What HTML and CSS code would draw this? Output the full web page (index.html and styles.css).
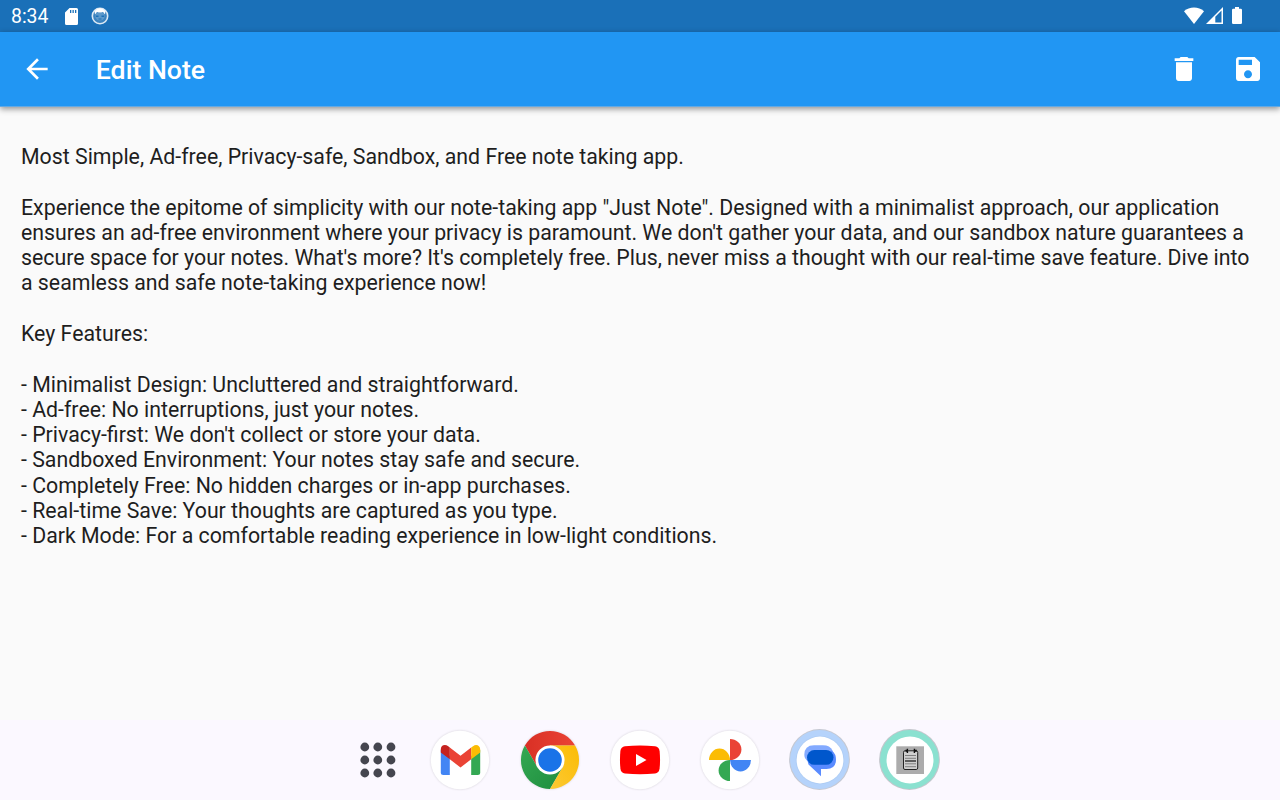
FILE: index.html
```html
<!DOCTYPE html>
<html lang="en">
<head>
<meta charset="utf-8">
<title>Edit Note</title>
<link rel="stylesheet" href="styles.css">
</head>
<body>
<div class="screen">
  <header class="status">
    <span class="clock">8:34</span>
    <svg class="sd" viewBox="0 0 13 17"><path fill="#fff" fill-rule="evenodd" d="M4.5 0H11.5Q13 0 13 1.5V15.5Q13 17 11.5 17H1.5Q0 17 0 15.5V4.5ZM5 2V5H6.3V2ZM7.5 2V5H8.8V2ZM10 2V5H11.3V2Z"/></svg>
    <svg class="face" viewBox="0 0 18 18"><circle cx="9" cy="9" r="7.7" fill="#3b83bf" stroke="#dce9f4" stroke-width="1.6"/><path fill="#fff" d="M3.5 4Q9-1.5 14.5 4L14 7.5 12 5Q9 6 6 5L4 7.5Z"/><path fill="#5c99cb" d="M4.5 7.5 6 5.5Q9 6.5 12 5.5L13.5 7.5V11Q12 13.5 9 13.5T4.5 11Z"/><path fill="#1a70b8" d="M5 8.5H7.5V10H5ZM10.5 8.5H13V10H10.5ZM7.5 11.5H10.5V12.5H7.5Z"/></svg>
    <span class="grow"></span>
    <svg class="wifi" viewBox="0 0 20 17"><path fill="#fff" d="M0 4.2Q4.3.5 10 .5T20 4.2L10 17Z"/></svg>
    <svg class="signal" viewBox="0 0 17 17"><path fill="#fff" fill-rule="evenodd" d="M17 0V17H0ZM15.5 3.6 9.3 9.8V15.5H15.5Z"/></svg>
    <svg class="battery" viewBox="0 0 10 17"><path fill="#fff" d="M3 0H7V1.7H8.8Q10 1.7 10 2.9V15.8Q10 17 8.8 17H1.2Q0 17 0 15.8V2.9Q0 1.7 1.2 1.7H3Z"/></svg>
  </header>
  <nav class="appbar">
    <svg class="icon" viewBox="0 0 24 24"><path d="M20 11H7.83l5.59-5.59L12 4l-8 8 8 8 1.41-1.41L7.83 13H20v-2z"/></svg>
    <h1 class="title">Edit Note</h1>
    <svg class="icon" viewBox="0 0 24 24"><path d="M6 19c0 1.1.9 2 2 2h8c1.1 0 2-.9 2-2V7H6v12zM19 4h-3.5l-1-1h-5l-1 1H5v2h14V4z"/></svg>
    <svg class="icon" viewBox="0 0 24 24"><path d="M17 3H5c-1.11 0-2 .9-2 2v14c0 1.1.89 2 2 2h14c1.1 0 2-.9 2-2V7l-4-4zm-5 16c-1.66 0-3-1.34-3-3s1.34-3 3-3 3 1.34 3 3-1.34 3-3 3zm3-10H5V5h10v4z"/></svg>
  </nav>
  <main class="note">
    <p>Most Simple, Ad-free, Privacy-safe, Sandbox, and Free note taking app.</p>
    <p>Experience the epitome of simplicity with our note-taking app "Just Note". Designed with a minimalist approach, our application<br>ensures an ad-free environment where your privacy is paramount. We don't gather your data, and our sandbox nature guarantees a<br>secure space for your notes. What's more? It's completely free. Plus, never miss a thought with our real-time save feature. Dive into<br>a seamless and safe note-taking experience now!</p>
    <p>Key Features:</p>
    <p>- Minimalist Design: Uncluttered and straightforward.<br>- Ad-free: No interruptions, just your notes.<br>- Privacy-first: We don't collect or store your data.<br>- Sandboxed Environment: Your notes stay safe and secure.<br>- Completely Free: No hidden charges or in-app purchases.<br>- Real-time Save: Your thoughts are captured as you type.<br>- Dark Mode: For a comfortable reading experience in low-light conditions.</p>
  </main>
  <footer class="dock">
    <svg class="app" viewBox="-8 0 62 62"><g fill="#45464f"><circle cx="17.8" cy="18" r="4.4"/><circle cx="30.8" cy="18" r="4.4"/><circle cx="44" cy="18" r="4.4"/><circle cx="17.8" cy="31" r="4.4"/><circle cx="30.8" cy="31" r="4.4"/><circle cx="44" cy="31" r="4.4"/><circle cx="17.8" cy="44" r="4.4"/><circle cx="30.8" cy="44" r="4.4"/><circle cx="44" cy="44" r="4.4"/></g></svg>
    <svg class="app disc" viewBox="0 0 62 62"><circle cx="31" cy="31" r="29.2" fill="#fff"/><path fill="#4285f4" d="M11.8 21V43.5Q11.8 46 14.3 46H20.8V27Z"/><path fill="#34a853" d="M42.2 27V46H48.7Q51.2 46 51.2 43.5V21Z"/><path fill="#ea4335" d="M20.8 18.5 31.5 26.8 42.2 18.5V30.2L31.5 38.4 20.8 30.2Z"/><path fill="#c5221f" d="M11.8 23.6V20.3C11.8 16 16.2 14.7 19.2 17.2L20.8 18.5V30.2Z"/><path fill="#fbbc04" d="M42.2 30.2V18.6L44 17.2C47.2 14.6 51.2 16.5 51.2 20.3V23.6Z"/></svg>
    <svg class="app disc" viewBox="0 0 62 62"><defs><linearGradient id="cr"><stop stop-color="#d93025"/><stop offset="1" stop-color="#ea4335"/></linearGradient><linearGradient id="cg" x1="1" y1="1" x2="0" y2="0"><stop stop-color="#1e8e3e"/><stop offset="1" stop-color="#34a853"/></linearGradient><linearGradient id="cy" x1="0" y1="1" x2="1" y2="0"><stop stop-color="#fcc934"/><stop offset="1" stop-color="#fbbc04"/></linearGradient></defs><path fill="url(#cr)" d="M5.9 16.4A29 29 0 0 1 56.1 16.4H31L18.4 38.3Z"/><path fill="url(#cg)" d="M5.9 16.4A29 29 0 0 0 31 60L43.6 38.3 31 31 18.4 38.3Z"/><path fill="url(#cy)" d="M56.1 16.4A29 29 0 0 1 31 60L43.6 38.3 31 31V16.4Z"/><circle cx="31" cy="31" r="14.6" fill="#fff"/><circle cx="31" cy="31" r="11.8" fill="#1a73e8"/></svg>
    <svg class="app disc" viewBox="0 0 62 62"><circle cx="31" cy="31" r="29.2" fill="#fff"/><path fill="red" d="M16 17.2Q31 16 46 17.2 50 17.6 50.6 22 51.5 31 50.6 39.5 50 44 46 44.5 31 45.8 16 44.5 12 44 11.4 39.5 10.5 31 11.4 22 12 17.6 16 17.2Z"/><path fill="#fff" d="M27 25 37.5 31 27 37Z"/></svg>
    <svg class="app disc" viewBox="0 0 62 62"><circle cx="31" cy="31" r="29.2" fill="#fff"/><path fill="#ea4335" d="M31 10A11.4 10.5 0 0 1 31 31Z"/><path fill="#4285f4" d="M52 31A10.5 11.4 0 0 1 31 31Z"/><path fill="#34a853" d="M31 52A11.4 10.5 0 0 1 31 31Z"/><path fill="#fbbc04" d="M10 31A10.5 11.4 0 0 1 31 31Z"/></svg>
    <svg class="app" viewBox="0 0 62 62"><circle cx="30.5" cy="30.5" r="30.4" fill="#c5c8d2"/><circle cx="30.5" cy="30.5" r="29.4" fill="#b5d3fb"/><circle cx="31" cy="31" r="24.2" fill="#a8c8f0" opacity=".6"/><circle cx="31" cy="31" r="23.4" fill="#fff"/><path fill="#83aaff" d="M25 16.3H34Q41 16.3 43.5 21.5L40 34H26L20 33Q15.3 30 15.3 26 15.3 16.3 25 16.3Z"/><path fill="#598bff" d="M43 21.5Q47 25 47 30.5 47 40 37.5 40H32V47.2L19.5 35.5 18 30Z"/><rect x="18" y="21" width="26.5" height="14.8" rx="7.4" fill="#0057cc"/></svg>
    <svg class="app" viewBox="0 0 62 62"><circle cx="30.5" cy="30.5" r="30.4" fill="#c3c6cc"/><circle cx="30.5" cy="30.5" r="29.4" fill="#8be1d0"/><circle cx="31" cy="31" r="23.5" fill="#fff"/><path fill="#acacac" d="M17.3 17.3H45V45H17.3Z"/><rect x="24.5" y="21.8" width="14.2" height="18.7" rx="1.5" fill="#d0d0d0" stroke="#242424" stroke-width="1"/><path d="M26 26.5H37M26 29.3H37M26 34.8H37M26 37.7H37" stroke="#777" stroke-width=".9"/><path d="M26 32H37" stroke="#111" stroke-width="1.2"/><path d="M26.5 21.8H29M35 21.8H37.8" stroke="#111" stroke-width="2"/><path d="M28.4 19.7V24M35.4 19.7V24" stroke="#111" stroke-width="1.4"/></svg>
  </footer>
</div>
</body>
</html>
```
FILE: styles.css
```css
body {
  margin: 0;
  font-family: Roboto, sans-serif;
}

.screen {
  width: 1280px;
  height: 800px;
  display: flex;
  flex-direction: column;
  overflow: hidden;
  background: #fafafa;
}

.status {
  flex: none;
  height: 32px;
  box-sizing: border-box;
  padding: 0 38px 1px 11px;
  display: flex;
  align-items: center;
  background: #1a70b8;
  color: #fff;
}

.clock {
  width: 54px;
  font-size: 19.4px;
  line-height: 32px;
  padding-top: 3px;
}

.sd { width: 13px; height: 17px; padding-top: 1px; }
.face { width: 18px; height: 18px; margin-left: 13px; padding-top: 1px; }
.grow { flex: 1; }
.wifi { width: 20px; height: 17px; }
.signal { width: 17px; height: 17px; margin-left: 1.5px; }
.battery { width: 10px; height: 17px; margin-left: 9.5px; }

.appbar {
  flex: none;
  height: 74.67px;
  box-sizing: border-box;
  padding: 0 16px 0 21.3px;
  display: flex;
  align-items: center;
  background: #2196f3;
  box-shadow: 0 2px 6px rgba(0, 0, 0, .42), inset 0 -1px #64a9e3;
}

.icon {
  width: 32px;
  height: 32px;
  fill: #fff;
}

.icon + .icon { margin-left: 32px; }

.appbar .title {
  flex: 1;
  margin: 0 0 0 42.5px;
  font-size: 26.67px;
  line-height: 32px;
  font-weight: 500;
  color: #fff;
  padding-top: 2px;
}

.note {
  flex: 1;
  padding: 37.22px 0 0 21px;
  font-size: 21.3px;
  line-height: 25.17px;
  color: #1e1e1e;
  white-space: nowrap;
}

.note p { margin: 0 0 25.66px; }

.dock {
  flex: none;
  height: 80px;
  box-sizing: border-box;
  display: flex;
  justify-content: center;
  align-items: center;
  gap: 28px;
  background: #fbf8ff;
}

.app {
  width: 62px;
  height: 62px;
}

.disc { filter: drop-shadow(0 0 1px rgba(0, 0, 0, .16)); }
```
